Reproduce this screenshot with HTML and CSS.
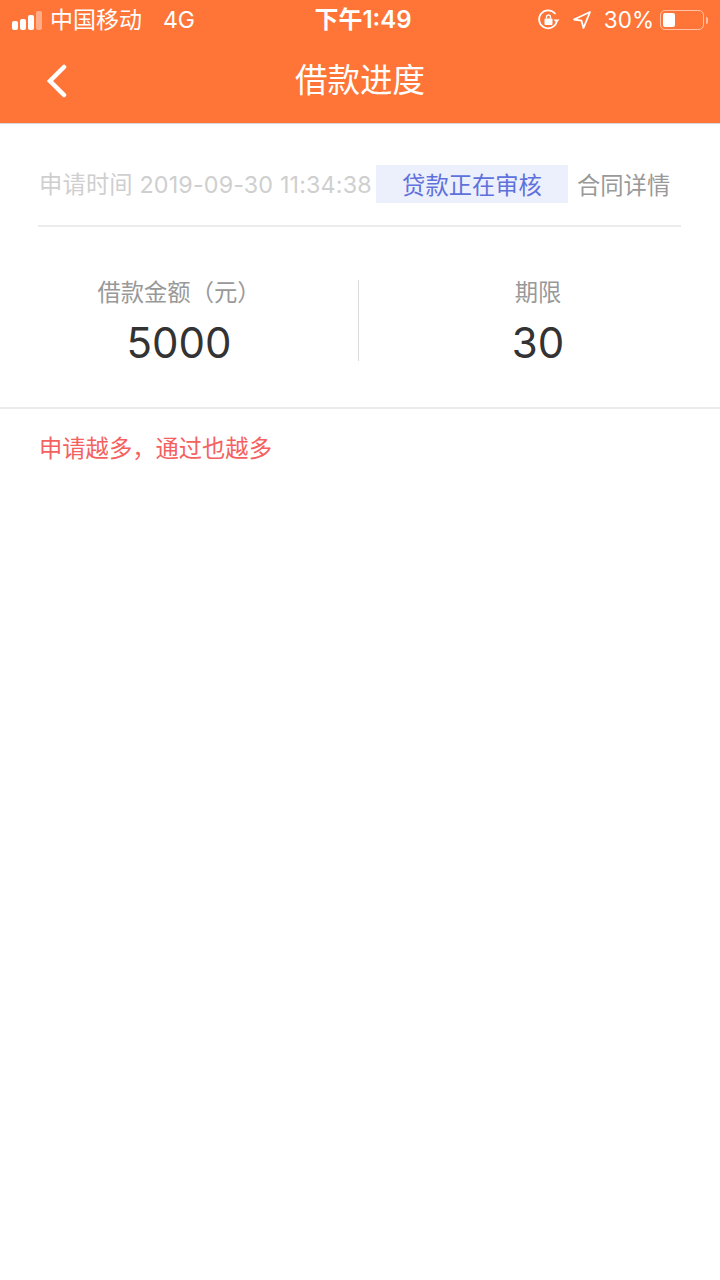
FILE: index.html
```html
<!DOCTYPE html>
<html lang="zh-CN">
<head>
    <meta charset="UTF-8">
    <meta name="viewport" content="width=device-width, initial-scale=1.0">
    <title>借款进度</title>
    <link rel="stylesheet" href="styles.css">
</head>
<body>

    <!-- Orange header -->
    <header class="header">
        <div class="status-bar">
            <div class="status-left">
                <div class="signal">
                    <span class="dot d1"></span>
                    <span class="dot d2"></span>
                    <span class="dot d3"></span>
                    <span class="dot d4"></span>
                </div>
                <span class="carrier">中国移动</span>
                <span class="network">4G</span>
            </div>
            <div class="status-time">下午1:49</div>
            <div class="status-right">
                <svg class="icon-lock" width="24" height="24" viewBox="0 0 24 24" fill="none">
                    <path d="M19.500 14.500A9 9 0 1 1 18 5.500" stroke="#fff" stroke-width="1.700" stroke-linecap="round"/>
                    <path d="M16.500 11.500h6l-3 3.500z" fill="#fff"/>
                    <rect x="7.500" y="10.500" width="8" height="6.500" rx="1" fill="#fff"/>
                    <path d="M9.500 10.500V9a2 2 0 0 1 4 0v1.500" stroke="#fff" stroke-width="1.300"/>
                </svg>
                <svg class="icon-arrow" width="20" height="20" viewBox="0 0 20 20" fill="none">
                    <path d="M18 2 2 9.500l7.500 1.200L11.500 18z" stroke="#fff" stroke-width="1.800" stroke-linejoin="round"/>
                </svg>
                <span class="battery-text">30%</span>
                <div class="battery">
                    <div class="battery-level"></div>
                </div>
                <div class="battery-cap"></div>
            </div>
        </div>
        <div class="nav-bar">
            <svg class="back" width="24" height="34" viewBox="0 0 24 34" fill="none">
                <path d="M20 3 6 17l14 14" stroke="#fff" stroke-width="4.500" stroke-linecap="round" stroke-linejoin="miter"/>
            </svg>
            <div class="nav-title">借款进度</div>
        </div>
    </header>

    <!-- Apply info -->
    <section class="summary">
        <div class="apply-row">
            <span class="apply-time">申请时间 2019-09-30 11:34:38</span>
            <span class="apply-status">贷款正在审核</span>
            <span class="apply-link">合同详情</span>
        </div>
        <div class="amount-row">
            <div class="amount-col">
                <div class="amount-label">借款金额（元）</div>
                <div class="amount-value">5000</div>
            </div>
            <div class="amount-col amount-term">
                <div class="amount-label">期限</div>
                <div class="amount-value">30</div>
            </div>
        </div>
    </section>

    <p class="tip">申请越多，通过也越多</p>

</body>
</html>
```

FILE: styles.css
```css
/* Global Styles */
body {
    margin: 0;
    height: 1280px;
    overflow: hidden;
    background-color: #fff;
    font-family: Inter, "Noto Sans CJK SC", sans-serif;
}

/* Header */
.header {
    height: 123px;
    background-color: #ff7538;
    color: #fff;
    box-shadow: 0 1px 0 #d8d8d8;
}

.status-bar {
    height: 40px;
    display: grid;
    grid-template-columns: 1fr auto 1fr;
    align-items: center;
    font-size: 23px;
    line-height: 28px;
}

.status-left {
    display: flex;
    align-items: center;
    padding-left: 12px;
}

.signal {
    display: flex;
    align-items: flex-end;
    gap: 2px;
    margin-right: 8px;
}

.dot {
    width: 6px;
    background-color: #fff;
    border-radius: 2px;
}

.d1 { height: 9px; }
.d2 { height: 11px; }
.d3 { height: 15px; }
.d4 { height: 19px; opacity: 0.4; }

.network {
    margin-left: 21px;
    font-size: 23px;
}

.status-time {
    margin-left: 6px;
    font-size: 24px;
    font-weight: 600;
}

.status-right {
    display: flex;
    align-items: center;
    justify-content: flex-end;
    padding-right: 12px;
    font-size: 22.500px;
}

.icon-lock {
    margin-right: 11px;
}

.icon-arrow {
    margin-right: 12px;
}

.battery-text {
    margin-right: 6px;
}

.battery {
    width: 44px;
    height: 20px;
    box-sizing: border-box;
    padding: 2px;
    border: 1px solid rgba(255, 255, 255, 0.55);
    border-radius: 5px;
}

.battery-level {
    width: 12px;
    height: 100%;
    background-color: #fff;
    border-radius: 2px;
}

.battery-cap {
    width: 2px;
    height: 7px;
    margin-left: 2px;
    background-color: rgba(255, 255, 255, 0.55);
    border-radius: 0 2px 2px 0;
}

/* Nav */
.nav-bar {
    position: relative;
    height: 83px;
    display: flex;
    justify-content: center;
    align-items: center;
}

.back {
    position: absolute;
    left: 44px;
    top: 24px;
}

.nav-title {
    font-size: 32.500px;
    line-height: 40px;
    margin-bottom: 2px;
}

/* Summary */
.summary {
    border-bottom: 2px solid #ececec;
    height: 286px;
    box-sizing: border-box;
}

.apply-row {
    height: 104px;
    padding-top: 20px;
    margin: 0 39px 0 38px;
    display: flex;
    align-items: center;
    border-bottom: 2px solid #ececec;
    box-sizing: border-box;
    font-size: 23.300px;
    white-space: nowrap;
}

.apply-time {
    width: 334px;
    margin-left: 1px;
    margin-top: -2px;
    letter-spacing: 0.150px;
    color: #cfcfcf;
}

.apply-status {
    width: 192px;
    height: 38px;
    margin-left: 3px;
    line-height: 41px;
    text-align: center;
    background-color: #eceffc;
    color: #5f71db;
}

.apply-link {
    margin-left: 9px;
    color: #999;
}

.amount-row {
    display: flex;
    margin-top: 53px;
}

.amount-col {
    width: 358px;
    height: 81px;
    text-align: center;
}

.amount-term {
    width: 362px;
    padding-right: 3px;
    box-sizing: border-box;
    border-left: 1px solid #dcdcdc;
}

.amount-label {
    font-size: 23.300px;
    line-height: 26px;
    color: #999;
}

.amount-value {
    margin-top: 12px;
    font-size: 42px;
    line-height: 50px;
    color: #333;
}

/* Tip */
.tip {
    margin: 26px 0 0 39px;
    font-size: 23.300px;
    line-height: 28px;
    color: #f4615f;
}
```
